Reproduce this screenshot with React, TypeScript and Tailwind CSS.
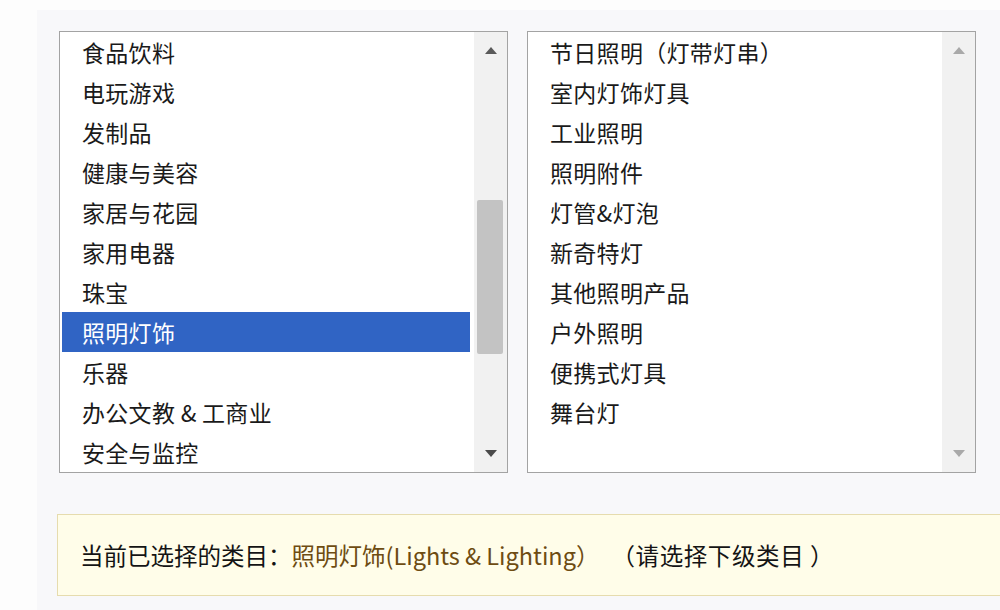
import React from "react";

const leftItems = [
  "食品饮料",
  "电玩游戏",
  "发制品",
  "健康与美容",
  "家居与花园",
  "家用电器",
  "珠宝",
  "照明灯饰",
  "乐器",
  "办公文教 & 工商业",
  "安全与监控",
];

const rightItems = [
  "节日照明（灯带灯串）",
  "室内灯饰灯具",
  "工业照明",
  "照明附件",
  "灯管&灯泡",
  "新奇特灯",
  "其他照明产品",
  "户外照明",
  "便携式灯具",
  "舞台灯",
];

const Arrow = ({ up, color }: { up?: boolean; color: string }) => (
  <svg width="12" height="7" viewBox="0 0 12 7" className="block">
    {up ? (
      <path d="M6 0 L12 7 L0 7 Z" fill={color} />
    ) : (
      <path d="M0 0 L12 0 L6 7 Z" fill={color} />
    )}
  </svg>
);

interface ListProps {
  items: string[];
  selected?: string;
  disabled?: boolean;
}

const ListBox: React.FC<ListProps> = ({ items, selected, disabled }) => {
  return (
    <div className="w-[449px] h-[442px] border border-[#a3a3a3] bg-white flex overflow-hidden">
      <div className="flex-1 pl-[2px] pr-[4px]">
        {items.map((it) => (
          <div
            key={it}
            className={
              "h-[40px] flex items-center pl-[20px] whitespace-pre tracking-[0.3px] " +
              (it === selected ? "bg-[#3064c4] text-white" : "text-[#1a1a1a]")
            }
          >
            {it}
          </div>
        ))}
      </div>
      <div className="w-[33px] bg-[#f1f1f1] flex flex-col items-center">
        <div className="h-[36px] flex items-center justify-center pt-[1px]">
          <Arrow up color={disabled ? "#a9a9a9" : "#5a5a5a"} />
        </div>
        <div className="flex-1 w-full relative">
          {!disabled && (
            <div className="absolute left-[3px] right-[4px] top-[132px] h-[154px] bg-[#c3c3c3] rounded-[2px]" />
          )}
        </div>
        <div className="h-[36px] flex items-center justify-center pb-[2px]">
          <Arrow color={disabled ? "#a9a9a9" : "#4a4a4a"} />
        </div>
      </div>
    </div>
  );
};

export default function App() {
  return (
    <div
      className="w-[1000px] h-[610px] bg-[#fdfdfd] flex overflow-hidden text-[23px] leading-none"
      style={{ fontFamily: '"Noto Sans CJK SC", "Noto Sans", sans-serif' }}
    >
      <div className="w-[37px] shrink-0" />
      <div className="flex-1 mt-[10px] bg-[#f8f8fa] flex flex-col">
        <div className="flex gap-[19px] pl-[22px] pt-[21px]">
          <ListBox items={leftItems} selected="照明灯饰" />
          <ListBox items={rightItems} disabled />
        </div>
        <div className="ml-[20px] mt-[41px] h-[82px] border border-[#e6dcae] border-r-0 bg-[#fffde9] flex items-center pl-[22px] pt-[2px] text-[23.5px] whitespace-pre">
          <span className="text-[#141414]">当前已选择的类目：</span>
          <span className="text-[#6e4c12]">照明灯饰(Lights &amp; Lighting）</span>
          <span className="text-[#141414] ml-[12px] tracking-[0.6px]">（请选择下级类目 ）</span>
        </div>
      </div>
    </div>
  );
}
